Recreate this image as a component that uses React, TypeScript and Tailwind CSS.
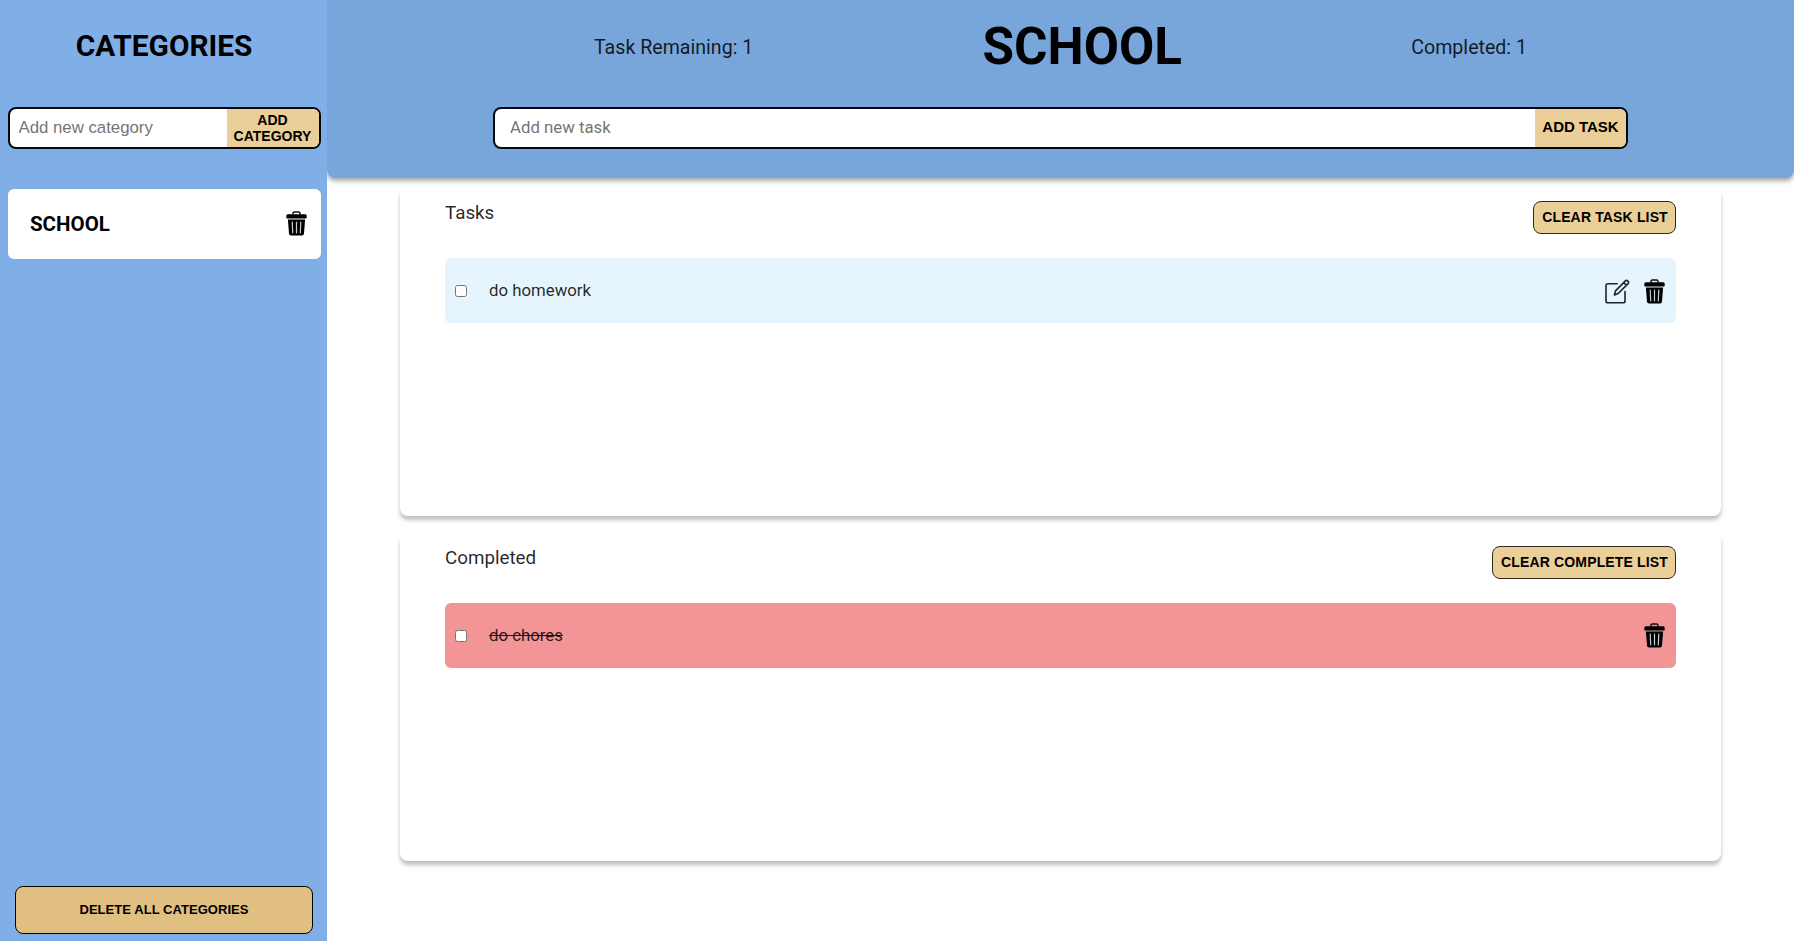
import React from "react";

function TrashIcon() {
  return (
    <svg width="21" height="25" viewBox="0 0 21 25" fill="none" className="block shrink-0">
      <path d="M7 4V2.200Q7 1 8.400 1h4.200Q14 1 14 2.200V4" stroke="#111" strokeWidth="1.400" />
      <path d="M1.800 3.200h17.400q1.500 0 1.500 1.600v1.700q0 1.100-1 1.100H1.300q-1 0-1-1.100V4.800q0-1.600 1.500-1.600z" fill="#000" />
      <path d="M1.900 8.400h17.200L18 22.600q-.2 1.900-2 1.900H5q-1.800 0-2-1.900z" fill="#000" />
      <path d="M6.200 11l.5 10.800M10.500 11v10.800M14.800 11l-.5 10.800" stroke="#c5cdd2" strokeWidth="1.200" strokeLinecap="round" />
    </svg>
  );
}

function EditIcon() {
  return (
    <svg width="25" height="25" viewBox="0 0 25 25" fill="none" stroke="#1b2329" strokeWidth="1.600" strokeLinecap="round" strokeLinejoin="round" className="block shrink-0">
      <path d="M12.200 4.800H2.800Q1 4.800 1 6.600v15.400q0 1.800 1.800 1.800h15.400q1.800 0 1.800-1.800v-9.500" />
      <path d="M9.400 15.900l1.300-4.300L20.400 1.900q1.100-1.100 2.300 0l.4.400q1.100 1.200 0 2.300L13.500 14.300zM18.700 3.600l2.700 2.700" />
    </svg>
  );
}

const card = "flex h-[328px] flex-col rounded-lg bg-white px-[45px] pt-[13px] shadow-[0_4px_4px_rgba(0,0,0,0.25)]";
const clearButton =
  "flex h-[33px] items-center justify-center rounded-lg border border-[#30291c] bg-[#eacf98] pl-px font-['Liberation_Sans',Arial,sans-serif] text-[14px] font-bold tracking-[0.15px] whitespace-nowrap text-black";
const checkbox = "block size-3 shrink-0 appearance-none rounded-[2.5px] border border-[#767676] bg-white";

export default function App() {
  return (
    <div className="flex h-[941px] w-[1794px] overflow-hidden bg-white font-[Roboto,sans-serif] text-black">
      <aside className="z-20 flex w-[327px] shrink-0 flex-col bg-[#80afe8] pr-[6.5px] pl-[7.5px]">
        <h1 className="mt-[25px] h-[42px] text-center text-[29.8px] leading-[42px] font-bold">CATEGORIES</h1>
        <form className="mt-[40px] flex h-[42px] overflow-hidden rounded-lg border-2 border-[#05080c] bg-white">
          <input
            placeholder="Add new category"
            className="min-w-0 flex-1 pl-[9px] font-['Liberation_Sans',Arial,sans-serif] text-[16.8px] outline-none placeholder:text-[#757575]"
          />
          <button type="button" className="w-[92px] bg-[#eacf98] font-['Liberation_Sans',Arial,sans-serif] text-[14px] leading-4 font-bold">
            ADD<br />CATEGORY
          </button>
        </form>
        <div className="mt-10 flex h-[70px] items-center justify-between rounded-md bg-white pr-[13.5px] pl-[22.5px]">
          <span className="text-[20.5px] font-bold">SCHOOL</span>
          <span className="-mt-px"><TrashIcon /></span>
        </div>
        <button type="button" className="mx-[7.5px] mt-auto mb-[7px] h-[48px] rounded-lg border border-black bg-[#e1bf80] font-['Liberation_Sans',Arial,sans-serif] text-[13px] font-bold tracking-[0.05px]">
          DELETE ALL CATEGORIES
        </button>
      </aside>

      <main className="flex min-w-0 flex-1 flex-col">
        <header className="z-10 h-[178px] shrink-0 rounded-b-lg bg-[#78a6db] shadow-[0_3px_5px_rgba(0,0,0,0.35)]">
          <div className="flex h-[92px] items-center justify-between px-[267px]">
            <p className="pt-[3px] text-[19.6px] text-black/85">Task Remaining: 1</p>
            <h2 className="pt-px text-[51.2px] leading-none font-bold">SCHOOL</h2>
            <p className="pt-[3px] text-[19.6px] text-black/85">Completed: 1</p>
          </div>
          <form className="mx-[166px] mt-[14.5px] flex h-[42px] overflow-hidden rounded-lg border-2 border-[#05080c] bg-white">
            <input placeholder="Add new task" className="min-w-0 flex-1 pl-[15px] text-[16.8px] outline-none placeholder:text-[#757575]" />
            <button type="button" className="w-[91px] bg-[#eacf98] font-['Liberation_Sans',Arial,sans-serif] text-[15px] font-bold">
              ADD TASK
            </button>
          </form>
        </header>

        <div className="mt-[10px] flex flex-col gap-[17px] px-[73px] text-black/85">
          <section className={card}>
            <div className="flex justify-between">
              <h3 className="pt-px text-[18.8px] leading-[22px]">Tasks</h3>
              <button type="button" className={`${clearButton} w-[143px]`}>CLEAR TASK LIST</button>
            </div>
            <div className="mt-6 flex h-[65px] items-center rounded-md bg-[#e6f4fe] pr-[11px] pl-[10px]">
              <span className={checkbox} />
              <span className="ml-[22px] flex-1 text-[16.8px]">do homework</span>
              <span className="mt-px"><EditIcon /></span>
              <span className="mt-px ml-[14px]"><TrashIcon /></span>
            </div>
          </section>
          <section className={card}>
            <div className="flex justify-between">
              <h3 className="pt-px text-[18.8px] leading-[22px]">Completed</h3>
              <button type="button" className={`${clearButton} w-[184px]`}>CLEAR COMPLETE LIST</button>
            </div>
            <div className="mt-6 flex h-[65px] items-center rounded-md bg-[#f39596] pr-[11px] pl-[10px]">
              <span className={checkbox} />
              <span className="ml-[22px] flex-1 text-[16.8px] line-through">do chores</span>
              <TrashIcon />
            </div>
          </section>
        </div>
      </main>
    </div>
  );
}
